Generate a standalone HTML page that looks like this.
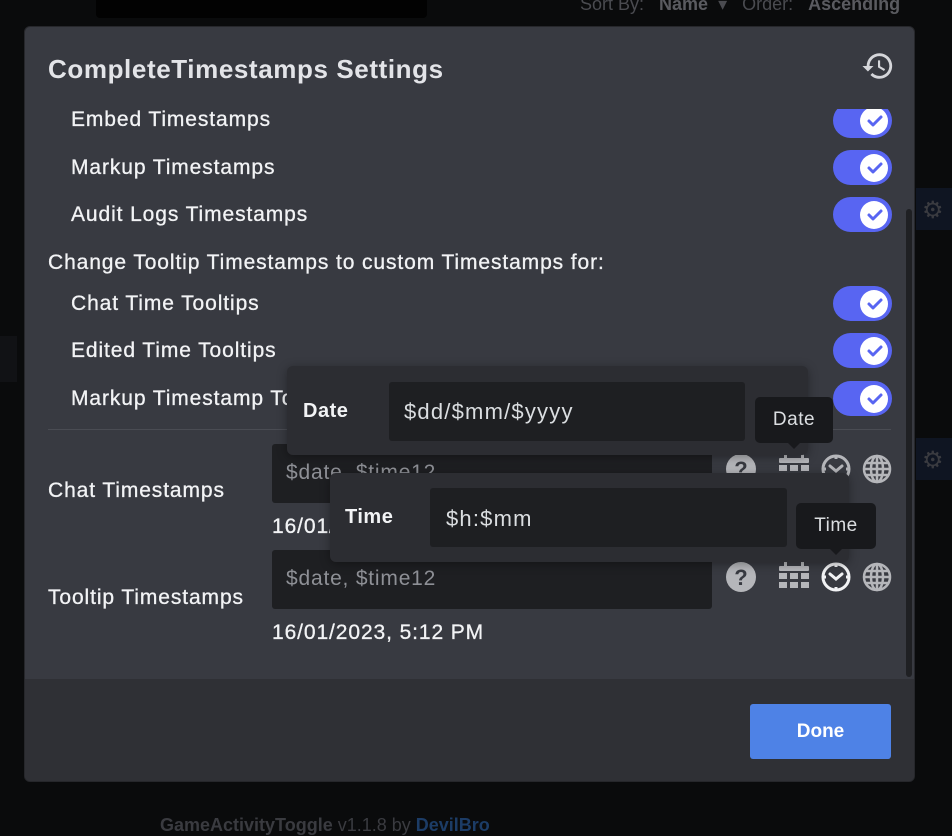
<!DOCTYPE html>
<html><head><meta charset="utf-8"><style>
*{box-sizing:border-box;margin:0;padding:0}
body{width:952px;height:825px;background:#0a0b0c;font-family:"Liberation Sans",sans-serif;position:relative;overflow:hidden;color:#f2f3f5}
.abs{position:absolute}
.modal{left:24px;top:26px;width:891px;height:756px;background:#383a41;border-radius:6px;overflow:hidden;border:1px solid #26272b}
.title{left:23px;top:27px;font-size:26px;font-weight:bold;color:#e3e4e8;letter-spacing:0.6px}
.clip{left:0;top:82px;width:891px;height:570px;overflow:hidden}
.lbl{font-size:21px;color:#f2f3f5;white-space:nowrap;letter-spacing:0.9px;-webkit-text-stroke:0.3px #f2f3f5}
.tog{width:59px;height:35px;border-radius:18px;background:#5865f2}
.tog .k{position:absolute;right:4px;top:3.5px;width:28px;height:28px;border-radius:50%;background:#fff}
.inp{background:#1e1f22;border-radius:3px}
.ph{font-size:21px;color:#8e9096;letter-spacing:0.8px}
.footer{left:0;top:652px;width:891px;height:104px;background:#2f3035}
.pop{background:#2c2d32;border-radius:6px;box-shadow:0 2px 10px rgba(0,0,0,.35)}
.tip{background:#18191c;border-radius:5px;color:#dbdee1;font-size:19px;text-align:center;letter-spacing:0.5px}
.tip:after{content:"";position:absolute;left:50%;bottom:-6px;margin-left:-6px;border:6px solid transparent;border-bottom:0;border-top-color:#18191c}
</style></head><body>
<div class="abs" style="left:96px;top:0;width:331px;height:18px;background:#020202;border-radius:0 0 4px 4px"></div>
<div class="abs" style="left:580px;top:-6px;font-size:18px;color:#4a4b50">Sort By: &nbsp; <b style="color:#5a5b60">Name</b> &nbsp;▾ &nbsp; Order: &nbsp; <b style="color:#5a5b60">Ascending</b></div>
<div class="abs" style="left:916px;top:188px;width:36px;height:42px;background:#0f1522"></div>
<div class="abs" style="left:916px;top:438px;width:36px;height:42px;background:#0f1522"></div>
<div class="abs" style="left:922px;top:196px;font-size:24px;color:#3a3b40">⚙</div>
<div class="abs" style="left:922px;top:446px;font-size:24px;color:#3a3b40">⚙</div>
<div class="abs" style="left:0;top:336px;width:17px;height:46px;background:#111215"></div>
<div class="abs" style="left:160px;top:815px;font-size:18px;color:#3a3b40;font-weight:bold">GameActivityToggle <span style="font-weight:normal">v1.1.8 by </span><span style="color:#1c3c66">DevilBro</span></div>

<div class="abs modal">
 <div class="abs title">CompleteTimestamps Settings</div>
 <svg class="abs" style="left:836px;top:22px" width="34" height="34" viewBox="0 0 24 24"><path fill="#d5d6da" d="M13 3a9 9 0 0 0-9 9H1l3.9 3.9L8.8 12H6a7 7 0 1 1 2.05 4.95l-1.42 1.42A9 9 0 1 0 13 3zm-1 5v5l4.25 2.52.77-1.28-3.52-2.09V8z"/></svg>
 <div class="abs clip">
  <div class="abs lbl" style="left:46px;top:-1px">Embed Timestamps</div>
  <div class="abs lbl" style="left:46px;top:47px">Markup Timestamps</div>
  <div class="abs lbl" style="left:46px;top:94px">Audit Logs Timestamps</div>
  <div class="abs lbl" style="left:23px;top:142px">Change Tooltip Timestamps to custom Timestamps for:</div>
  <div class="abs lbl" style="left:46px;top:183px">Chat Time Tooltips</div>
  <div class="abs lbl" style="left:46px;top:230px">Edited Time Tooltips</div>
  <div class="abs lbl" style="left:46px;top:278px">Markup Timestamp Tooltips</div>
  <div class="abs" style="left:23px;top:320px;width:843px;height:1px;background:#4a4c53"></div>
  <div class="abs lbl" style="left:23px;top:370px">Chat Timestamps</div>
  <div class="abs inp" style="left:247px;top:335px;width:440px;height:59px"></div>
  <div class="abs ph" style="left:261px;top:352px">$date, $time12</div>
  <div class="abs lbl" style="left:247px;top:406px">16/01/2023, 5:12 PM</div>
  <div class="abs lbl" style="left:23px;top:477px">Tooltip Timestamps</div>
  <div class="abs inp" style="left:247px;top:441px;width:440px;height:59px"></div>
  <div class="abs ph" style="left:261px;top:458px">$date, $time12</div>
  <div class="abs lbl" style="left:247px;top:512px">16/01/2023, 5:12 PM</div>
 </div>
 <div class="abs" style="left:0;top:82px;width:891px;height:570px;overflow:hidden">
  <div class="abs tog" style="left:808px;top:-6px"><div class="k"></div></div>
  <div class="abs tog" style="left:808px;top:41px"><div class="k"></div></div>
  <div class="abs tog" style="left:808px;top:88px"><div class="k"></div></div>
  <div class="abs tog" style="left:808px;top:177px"><div class="k"></div></div>
  <div class="abs tog" style="left:808px;top:224px"><div class="k"></div></div>
  <div class="abs tog" style="left:808px;top:272px"><div class="k"></div></div>
 </div>
 <div class="abs" style="left:881px;top:182px;width:6px;height:468px;background:#1f2023;border-radius:3px"></div>
 <div class="abs footer"></div>
 <div class="abs" style="left:725px;top:677px;width:141px;height:55px;background:#4e82e6;border-radius:3px;color:#fff;font-size:19px;font-weight:bold;text-align:center;line-height:55px">Done</div>
</div>

<svg class="abs" style="left:0;top:0" width="952" height="825">
 <defs>
  <g id="chk"><path d="M-6 0l4 4 8-8" fill="none" stroke="#5865f2" stroke-width="3" stroke-linecap="round" stroke-linejoin="round"/></g>
  <g id="q"><circle r="15" fill="#b5b6ba"/><text x="0" y="8" font-family="Liberation Sans" font-weight="bold" font-size="22" text-anchor="middle" fill="#383a41">?</text></g>
  <g id="cal" fill="#b5b6ba"><rect x="-15" y="-11" width="30" height="5" rx="1"/><rect x="-10" y="-15" width="3" height="6"/><rect x="7" y="-15" width="3" height="6"/><rect x="-15" y="-4" width="8" height="6"/><rect x="-4" y="-4" width="8" height="6"/><rect x="7" y="-4" width="8" height="6"/><rect x="-15" y="5" width="8" height="6"/><rect x="-4" y="5" width="8" height="6"/><rect x="7" y="5" width="8" height="6"/></g>
  <g id="clk" fill="none" stroke-width="3"><circle r="13"/><path d="M-6-3l6 5 6-5" stroke-linecap="round"/><path d="M0-13v3M0 13v-3M-13 0h3M13 0h-3"/></g>
  <g id="glb" fill="none" stroke="#b5b6ba" stroke-width="2.5"><circle r="13"/><ellipse rx="6" ry="13"/><path d="M-13 0h26M-11-6h22M-11 6h22M0-13v26"/></g>
 </defs>
 <g transform="translate(875,121)"><use href="#chk"/></g>
 <g transform="translate(875,168)"><use href="#chk"/></g>
 <g transform="translate(875,215)"><use href="#chk"/></g>
 <g transform="translate(875,304)"><use href="#chk"/></g>
 <g transform="translate(875,351)"><use href="#chk"/></g>
 <g transform="translate(875,399)"><use href="#chk"/></g>
 <use href="#q" x="741" y="469"/><use href="#cal" x="794" y="469"/><use href="#clk" x="836" y="469" stroke="#b5b6ba"/><use href="#glb" x="877" y="469"/>
 <use href="#q" x="741" y="577"/><use href="#cal" x="794" y="577"/><use href="#clk" x="836" y="577" stroke="#f2f3f5"/><use href="#glb" x="877" y="577"/>
</svg>

<div class="abs pop" style="left:287px;top:366px;width:521px;height:89px"></div>
<div class="abs" style="left:303px;top:400px;font-size:20px;font-weight:bold;color:#f2f3f5;letter-spacing:0.5px">Date</div>
<div class="abs inp" style="left:389px;top:382px;width:356px;height:59px;background:#1e1f22"></div>
<div class="abs" style="left:404px;top:399px;font-size:22px;color:#dbdee1;letter-spacing:1.2px">$dd/$mm/$yyyy</div>

<div class="abs pop" style="left:330px;top:473px;width:519px;height:89px"></div>
<div class="abs" style="left:345px;top:506px;font-size:20px;font-weight:bold;color:#f2f3f5;letter-spacing:0.5px">Time</div>
<div class="abs inp" style="left:430px;top:488px;width:357px;height:59px;background:#1e1f22"></div>
<div class="abs" style="left:446px;top:506px;font-size:22px;color:#dbdee1;letter-spacing:1.2px">$h:$mm</div>

<div class="abs tip" style="left:755px;top:397px;width:78px;height:46px;line-height:46px">Date</div>
<div class="abs tip" style="left:796px;top:503px;width:80px;height:46px;line-height:46px">Time</div>
</body></html>
